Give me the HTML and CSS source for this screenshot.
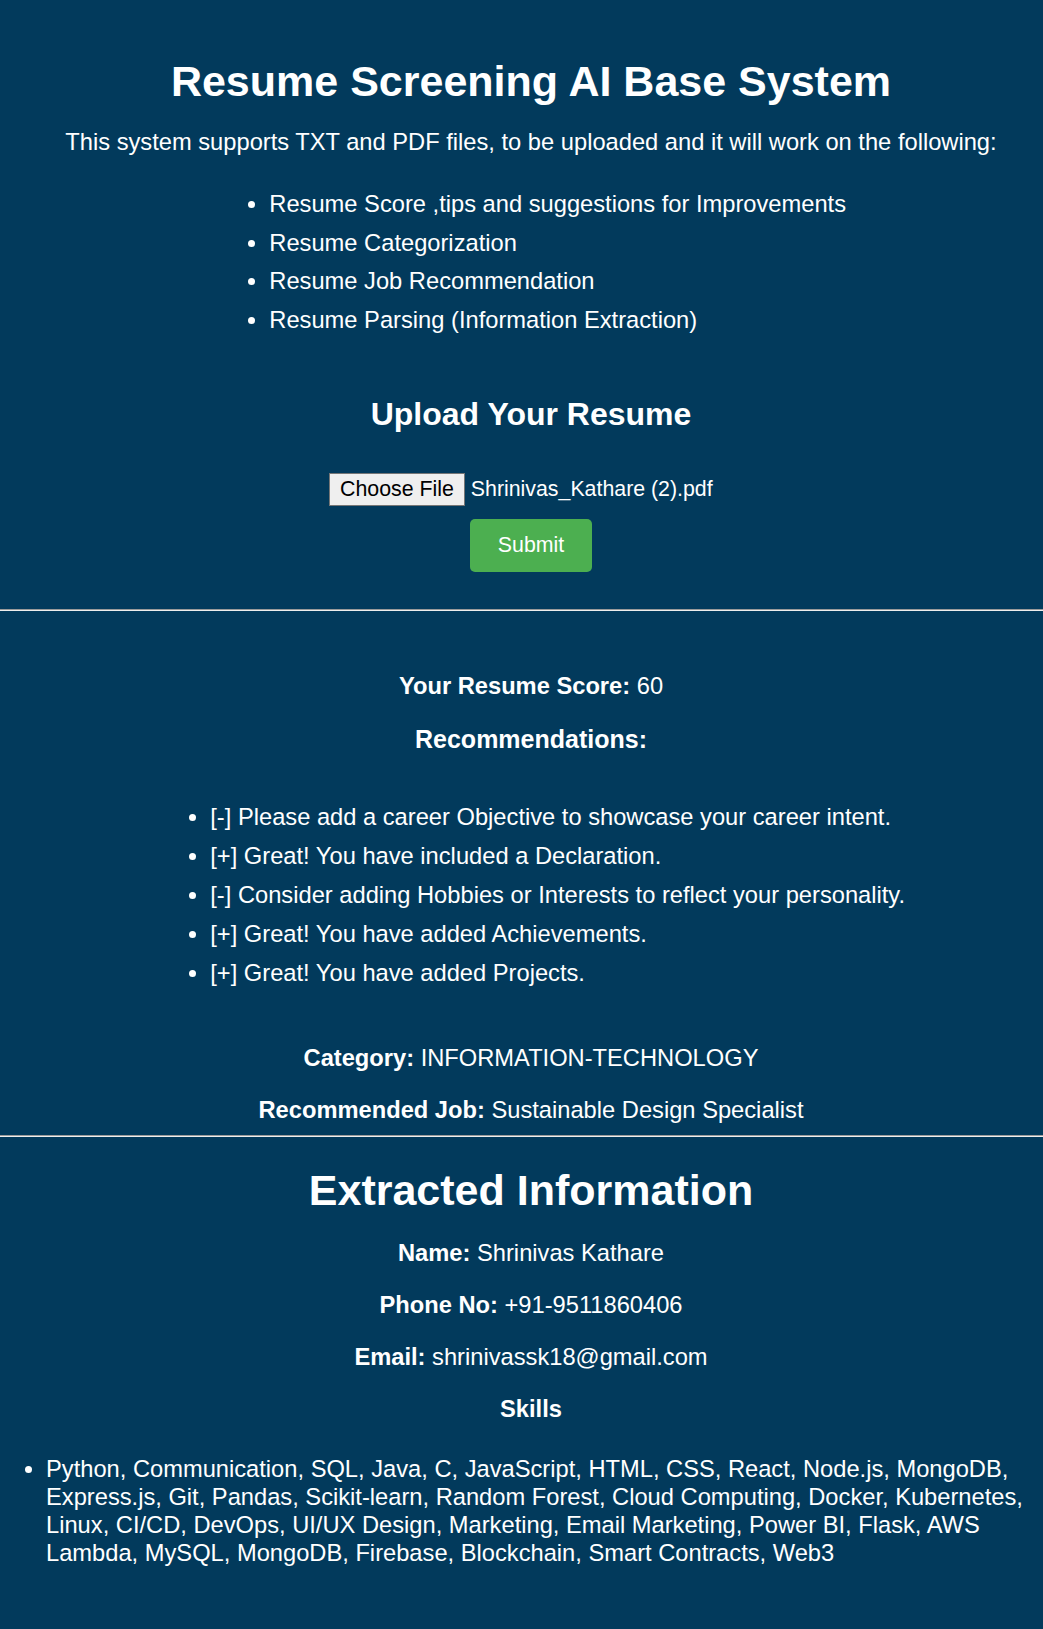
FILE: index.html
```html
<!DOCTYPE html>
<html lang="en">
<head>
<meta charset="utf-8">
<title>Resume Screening AI Base System</title>
<link rel="stylesheet" href="styles.css">
</head>
<body>
<header class="intro">
  <h1 class="title">Resume Screening AI Base System</h1>
  <p class="lead">This system supports TXT and PDF files, to be uploaded and it will work on the following:</p>
  <div class="center">
    <ul class="features">
      <li>Resume Score ,tips and suggestions for Improvements</li>
      <li>Resume Categorization</li>
      <li>Resume Job Recommendation</li>
      <li>Resume Parsing (Information Extraction)</li>
    </ul>
  </div>
  <h2 class="upload-title">Upload Your Resume</h2>
  <form class="upload-form">
    <div class="file-row">
      <span class="file-btn">Choose File</span>
      <span class="file-name">Shrinivas_Kathare (2).pdf</span>
    </div>
    <button type="button" class="submit">Submit</button>
  </form>
</header>
<hr class="divider">
<section class="results">
  <p class="line score"><strong>Your Resume Score:</strong> 60</p>
  <h3 class="rec-title">Recommendations:</h3>
  <div class="center recs-wrap">
    <ul class="recs">
      <li>[-] Please add a career Objective to showcase your career intent.</li>
      <li>[+] Great! You have included a Declaration.</li>
      <li>[-] Consider adding Hobbies or Interests to reflect your personality.</li>
      <li>[+] Great! You have added Achievements.</li>
      <li>[+] Great! You have added Projects.</li>
    </ul>
  </div>
  <p class="line category"><strong>Category:</strong> INFORMATION-TECHNOLOGY</p>
  <p class="line job"><strong>Recommended Job:</strong> Sustainable Design Specialist</p>
</section>
<hr class="divider">
<section class="extracted">
  <h1 class="title extracted-title">Extracted Information</h1>
  <p class="line"><strong>Name:</strong> Shrinivas Kathare</p>
  <p class="line"><strong>Phone No:</strong> +91-9511860406</p>
  <p class="line"><strong>Email:</strong> shrinivassk18@gmail.com</p>
  <p class="line"><strong>Skills</strong></p>
  <ul class="skills">
    <li>Python, Communication, SQL, Java, C, JavaScript, HTML, CSS, React, Node.js, MongoDB, Express.js, Git, Pandas, Scikit-learn, Random Forest, Cloud Computing, Docker, Kubernetes, Linux, CI/CD, DevOps, UI/UX Design, Marketing, Email Marketing, Power BI, Flask, AWS Lambda, MySQL, MongoDB, Firebase, Blockchain, Smart Contracts, Web3</li>
  </ul>
</section>
</body>
</html>
```

FILE: styles.css
```css
html, body {
  margin: 0;
  padding: 0;
}
body {
  background: #023a5c;
  color: #ffffff;
  font-family: "Liberation Sans", Arial, sans-serif;
  font-size: 23.7px;
  line-height: 28px;
  text-align: center;
  min-height: 1629px;
  overflow-x: hidden;
}
.intro,
.results,
.extracted {
  padding-left: 19px;
}
.intro {
  padding-top: 56px;
  padding-bottom: 37px;
}
.title {
  margin: 0;
  font-size: 43px;
  line-height: 50px;
  font-weight: bold;
}
.lead {
  margin: 22px 0 0;
}
.center {
  text-align: center;
}
.features,
.recs {
  display: inline-block;
  text-align: left;
  margin: 0;
  padding: 0 0 0 53.3px;
}
.features {
  margin-top: 34px;
}
.features li {
  margin-bottom: 10.7px;
}
.recs li {
  margin-bottom: 11px;
}
.features li:last-child,
.recs li:last-child {
  margin-bottom: 0;
}
.upload-title {
  margin: 62px 0 0;
  font-size: 32px;
  line-height: 37px;
}
.upload-form {
  margin-top: 40px;
  display: flex;
  flex-direction: column;
  align-items: center;
}
.file-row {
  width: 404px;
  display: flex;
  align-items: center;
  gap: 6px;
  font-size: 21.33px;
  line-height: 25px;
}
.file-btn {
  color: #000;
  background: #efefef;
  border: 1px solid #767676;
  padding: 3px 10px;
}
.submit {
  margin-top: 13px;
  background: #4caf50;
  color: #fff;
  border: none;
  border-radius: 5px;
  font-family: inherit;
  font-size: 21.33px;
  line-height: 25px;
  padding: 14px 28px;
}
.divider {
  margin: 0;
  border: 0;
  border-top: 1px solid #9a9a9a;
  border-bottom: 1px solid #eeeeee;
  height: 0;
}
.results {
  padding-top: 61px;
  padding-bottom: 11px;
}
.line {
  margin: 24px 0 0;
}
.results .score {
  margin-top: 0;
}
.rec-title {
  margin: 25px 0 0;
  font-size: 25px;
  line-height: 28px;
}
.recs-wrap {
  margin-top: 50px;
}
.results .category {
  margin-top: 57px;
}
.extracted {
  padding-top: 28px;
}
.skills {
  text-align: left;
  font-size: 23.7px;
  line-height: 28px;
  margin: 32px 0 0;
  padding: 0 0 0 27px;
}
```
